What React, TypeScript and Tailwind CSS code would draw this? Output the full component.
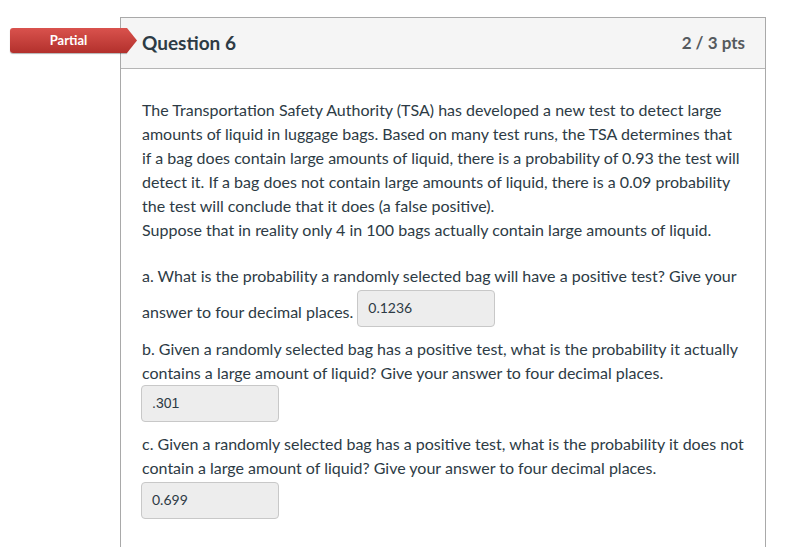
import React from "react";

const FONT = { fontFamily: "Lato, 'Noto Sans', sans-serif" };

function AnswerBox({ value, arial }: { value: string; arial?: boolean }) {
  return (
    <span
      className="inline-block h-[37px] w-[138px] rounded-[4px] border border-[#c8c8c8] bg-[#ededed] px-[10px] pt-[8px] align-middle text-[14px] leading-[18px] text-[#2d3b45]"
      style={arial ? { fontFamily: "'Liberation Sans', Arial, sans-serif" } : FONT}
    >
      {value}
    </span>
  );
}

export default function App() {
  return (
    <div className="min-h-[547px] bg-white pt-[17px]" style={FONT}>
      <div className="relative ml-[120px] w-[646px]">
        {/* Partial badge */}
        <div className="absolute left-[-110px] top-[11px] flex h-[25px] items-center">
          <div className="flex h-[25px] w-[117px] items-center justify-center rounded-l-[3px] bg-gradient-to-b from-[#d9524d] to-[#b3302c] text-[13px] font-bold text-white shadow-[0_1px_1px_rgba(0,0,0,0.3)]">
            Partial
          </div>
          <svg width="10" height="25" viewBox="0 0 10 25" className="block">
            <defs>
              <linearGradient id="g" x1="0" y1="0" x2="0" y2="1">
                <stop offset="0" stopColor="#d9524d" />
                <stop offset="1" stopColor="#b3302c" />
              </linearGradient>
            </defs>
            <polygon points="0,0 10,12.5 0,25" fill="url(#g)" />
          </svg>
        </div>

        <div className="min-h-[540px] border-x border-t border-[#a9a9a9]">
          <div className="flex h-[51px] items-center justify-between border-b border-[#b5b5b5] bg-[#f5f5f5] pl-[21px] pr-[20px]">
            <h2 className="text-[19px] font-bold text-[#2d3b45]">Question 6</h2>
            <span className="text-[17px] font-bold text-[#555a5e]">2 / 3 pts</span>
          </div>

          <div className="px-[21px] pt-[29px] text-[16px] leading-[24px] text-[#2d3b45]">
            <p>
              The Transportation Safety Authority (TSA) has developed a new test to detect large
              <br />
              amounts of liquid in luggage bags. Based on many test runs, the TSA determines that
              <br />
              if a bag does contain large amounts of liquid, there is a probability of 0.93 the test will
              <br />
              detect it. If a bag does not contain large amounts of liquid, there is a 0.09 probability
              <br />
              the test will conclude that it does (a false positive).
              <br />
              Suppose that in reality only 4 in 100 bags actually contain large amounts of liquid.
            </p>

            <div className="mt-[22px]">
              <div>a. What is the probability a randomly selected bag will have a positive test? Give your</div>
              <div className="mt-[2px] flex items-center gap-[4px]">
                <span className="mt-[6px]">answer to four decimal places.</span>
                <AnswerBox value="0.1236" />
              </div>
            </div>

            <div className="mt-[10px]">
              <div>
                b. Given a randomly selected bag has a positive test, what is the probability it actually
                <br />
                contains a large amount of liquid? Give your answer to four decimal places.
              </div>
              <div className="-ml-px">
                <AnswerBox value=".301" arial />
              </div>
            </div>

            <div className="mt-[10px]">
              <div>
                c. Given a randomly selected bag has a positive test, what is the probability it does not
                <br />
                contain a large amount of liquid? Give your answer to four decimal places.
              </div>
              <div className="-ml-px mt-[2px]">
                <AnswerBox value="0.699" />
              </div>
            </div>
          </div>
        </div>
      </div>
    </div>
  );
}
